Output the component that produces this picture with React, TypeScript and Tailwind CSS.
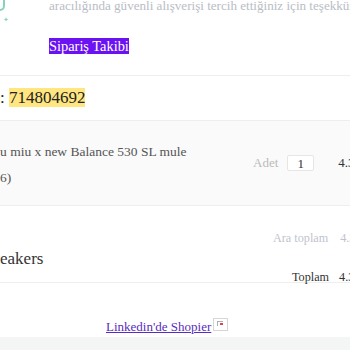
export default function App() {
  return (
    <div className="relative h-[350px] w-[350px] overflow-hidden whitespace-nowrap bg-white font-['Liberation_Serif',serif]">
      {/* header with thanks + tracking button */}
      <div className="flex h-[76px] border-b border-[#eeeeee]">
        <div className="w-[49px] shrink-0">
          <div className="-mt-[10px] -ml-[15px] h-[21px] w-[20px] rounded-[5px] border-2 border-[#86d3b8]" />
          <div className="mt-[5px] ml-[3px] text-[7px] leading-[8px] text-[#8fd6bd]">✦</div>
        </div>
        <div className="flex flex-col">
          <p className="-mt-[2px] text-[13.1px] leading-[15px] text-[#b9bdc4]">
            aracılığında güvenli alışverişi tercih ettiğiniz için teşekkür ederiz.
          </p>
          <p className="mt-[25px] text-[14.4px] leading-[16px]">
            <span className="bg-[#6a12f2] text-white">Sipariş Takibi</span>
          </p>
        </div>
      </div>

      {/* order number */}
      <div className="h-[45px] border-b border-[#eeeeee] pt-[12px]">
        <p className="text-[17px] leading-[19px] text-[#222]">
          : <span className="bg-[#ffe680]">714804692</span>
        </p>
      </div>

      {/* product row */}
      <div className="flex h-[85px] justify-between border-b border-[#eeeeee] bg-[#fafafa]">
        <div className="pt-[23px] text-[13.5px] leading-[16px] text-[#555]">
          <p>u miu x new Balance 530 SL mule</p>
          <p className="mt-[10px]">6)</p>
        </div>
        <div className="flex w-[97px] shrink-0 items-center text-[13px]">
          <span className="shrink-0 text-[#bbbbbb]">Adet</span>
          <span className="ml-[9px] flex h-[16px] w-[27px] shrink-0 items-center justify-center rounded-[2px] border border-[#e6e6e6] bg-white text-[13px] leading-none text-[#333]">
            1
          </span>
          <span className="ml-[24px] shrink-0 text-[#333]">4.350,00 TL</span>
        </div>
      </div>

      {/* totals */}
      <div className="flex h-[77px] justify-between border-b border-[#eeeeee]">
        <div className="pt-[43px] text-[17px] leading-[20px] text-[#333]">eakers</div>
        <div className="w-[77px] shrink-0">
          <div className="mt-[25px] flex text-[12.2px] leading-[14px] text-[#c0c4cc]">
            <span className="shrink-0">Ara toplam</span>
            <span className="ml-[12px] shrink-0">4.350,00 TL</span>
          </div>
          <div className="mt-[25px] flex pl-[19px] text-[12.2px] leading-[14px] text-[#333]">
            <span className="shrink-0">Toplam</span>
            <span className="ml-[10px] shrink-0">4.350,00 TL</span>
          </div>
        </div>
      </div>

      {/* footer link */}
      <div className="h-[54px] pt-[36px] pl-[106px]">
        <div className="flex items-start">
          <a className="text-[13px] leading-[15px] text-[#5b2bc0] underline">Linkedin'de Shopier </a>
          <span className="-mt-[1px] ml-[2px] flex h-[13px] w-[15px] items-start border border-[#d6d6d6] bg-white pt-[2px] pl-[3px]">
            <span className="h-[5px] w-[6px] border-t border-l border-[#b0b0b0]">
              <span className="ml-[2px] mt-[1px] block h-[2px] w-[3px] bg-[#e04060]" />
            </span>
          </span>
        </div>
      </div>
      <div className="h-[13px] bg-[#f4f6f6]" />
    </div>
  );
}
